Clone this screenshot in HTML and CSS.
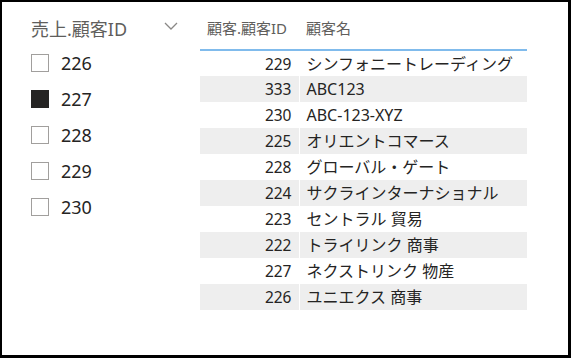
FILE: index.html
```html
<!DOCTYPE html>
<html>
  <head>
    <meta charset="UTF-8">
    <title>売上 顧客</title>
    <link rel="stylesheet" href="styles.css">
  </head>
  <body>
    <div class="frame">

      <div class="slicer">
        <div class="slicer-head">
          <span class="slicer-title">売上.顧客ID</span>
          <svg class="chevron" width="14" height="8" viewBox="0 0 14 8">
            <path d="M1 1 L7 7 L13 1" fill="none" stroke="#8a8886" stroke-width="1.3"/>
          </svg>
        </div>
        <ul class="slicer-list">
          <li><span class="box"></span>226</li>
          <li><span class="box checked"></span>227</li>
          <li><span class="box"></span>228</li>
          <li><span class="box"></span>229</li>
          <li><span class="box"></span>230</li>
        </ul>
      </div>

      <table class="grid">
        <thead>
          <tr>
            <th class="id">顧客.顧客ID</th>
            <th class="name">顧客名</th>
          </tr>
        </thead>
        <tbody>
          <tr><td class="id">229</td><td class="name">シンフォニートレーディング</td></tr>
          <tr><td class="id">333</td><td class="name">ABC123</td></tr>
          <tr><td class="id">230</td><td class="name">ABC-123-XYZ</td></tr>
          <tr><td class="id">225</td><td class="name">オリエントコマース</td></tr>
          <tr><td class="id">228</td><td class="name">グローバル・ゲート</td></tr>
          <tr><td class="id">224</td><td class="name">サクラインターナショナル</td></tr>
          <tr><td class="id">223</td><td class="name">セントラル 貿易</td></tr>
          <tr><td class="id">222</td><td class="name">トライリンク 商事</td></tr>
          <tr><td class="id">227</td><td class="name">ネクストリンク 物産</td></tr>
          <tr><td class="id">226</td><td class="name">ユニエクス 商事</td></tr>
        </tbody>
      </table>

    </div>
  </body>
</html>
```

FILE: styles.css
```css
*, html, body {
  margin: 0;
  padding: 0;
  box-sizing: border-box;
}

body {
  background: #fff;
  font-family: "Noto Sans", "Noto Sans CJK JP", sans-serif;
  color: #252423;
}

.frame {
  width: 571px;
  height: 358px;
  border: solid #000;
  border-width: 2px 3px 3px 2px;
  display: flex;
  align-items: flex-start;
}

/* slicer */

.slicer {
  width: 198px;
  padding-left: 29px;
  padding-top: 15px;
}

.slicer-head {
  display: flex;
  align-items: flex-start;
  height: 28px;
}

.slicer-title {
  font-size: 18px;
  line-height: 24px;
  color: #605e5c;
  width: 133px;
}

.chevron { margin-top: 5px }

.slicer-list { list-style: none }

.slicer-list li {
  display: flex;
  align-items: center;
  height: 36px;
  font-size: 18px;
  gap: 12px;
}

.box {
  width: 18px;
  height: 18px;
  border: 1px solid #a19f9d;
  background: #fff;
}

.box.checked {
  background: #252423;
  border-color: #252423;
}

/* table */

.grid {
  width: 327px;
  border-collapse: collapse;
  font-size: 16px;
}

.grid th {
  font-weight: normal;
  font-size: 15px;
  line-height: 20px;
  color: #605e5c;
  text-align: left;
  padding: 16px 7px 11px;
  border-bottom: 2px solid #80bbec;
}

.grid td {
  height: 26px;
  line-height: 20px;
  padding: 0 7px;
  white-space: nowrap;
}

.grid .id { width: 99px }

.grid td.id { text-align: right; font-size: 15.5px }

.grid td.name { border-left: 1px solid #fff }

.grid tbody tr:nth-child(even) { background: #eeeeee }
```
